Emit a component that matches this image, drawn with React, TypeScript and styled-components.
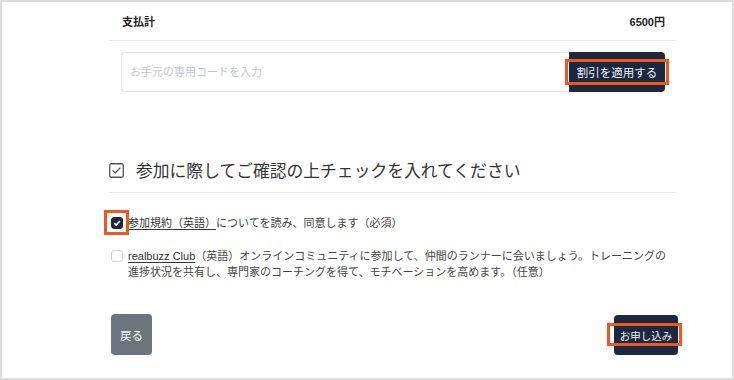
import React, { useState } from 'react';
import styled, { createGlobalStyle } from 'styled-components';

const GlobalStyle = createGlobalStyle`
  html, body {
    margin: 0;
    padding: 0;
    background: #fff;
  }
  body {
    font-family: "Liberation Sans", "Noto Sans CJK JP", sans-serif;
    color: #333;
  }
`;

const NAVY = '#1b2840';
const ORANGE = '#f0561d';

const Frame = styled.div`
  box-sizing: border-box;
  width: 734px;
  height: 380px;
  border: 2px solid #dcdcdc;
  background: #fff;
`;

const Content = styled.div`
  margin-left: 107px;
  width: 568px;
`;

const SummaryRow = styled.div`
  display: flex;
  align-items: center;
  justify-content: space-between;
  height: 38px;
  padding: 0 12px 0 13px;
  border-bottom: 1px solid #e9ecef;
  font-size: 11px;
  font-weight: 700;
  color: #222;
`;

const CouponGroup = styled.div`
  display: flex;
  height: 40px;
  margin: 11px 12px 0 12px;
`;

const CouponInput = styled.input`
  flex: 1;
  min-width: 0;
  box-sizing: border-box;
  height: 40px;
  border: 1px solid #e2e5e9;
  border-right: none;
  border-radius: 4px 0 0 4px;
  padding: 0 8px;
  font-family: "Liberation Sans", "Noto Sans CJK JP", sans-serif;
  font-size: 11px;
  color: #333;
  outline: none;
  &::placeholder {
    color: #c3c7cc;
  }
`;

const DarkButton = styled.button<{ $w: number; $h: number; $size: number; $radius?: string }>`
  position: relative;
  width: ${p => p.$w}px;
  height: ${p => p.$h}px;
  border: none;
  border-radius: ${p => p.$radius || '4px'};
  background: ${NAVY};
  color: #eef1f6;
  font-family: "Liberation Sans", "Noto Sans CJK JP", sans-serif;
  font-size: ${p => p.$size}px;
  padding: 0;
  cursor: pointer;
`;

const GreyButton = styled.button`
  width: 41px;
  height: 41px;
  border: none;
  border-radius: 4px;
  background: #6c757d;
  color: #f2f4f6;
  font-family: "Liberation Sans", "Noto Sans CJK JP", sans-serif;
  font-size: 11.5px;
  padding: 0;
`;

const Highlight = styled.span<{ $l: number; $t: number; $r: number; $b: number }>`
  position: absolute;
  left: ${p => p.$l}px;
  top: ${p => p.$t}px;
  right: ${p => p.$r}px;
  bottom: ${p => p.$b}px;
  border: 3px solid ${ORANGE};
  pointer-events: none;
`;

const Heading = styled.h2`
  display: flex;
  align-items: center;
  gap: 12px;
  margin: 64px 0 0 0;
  height: 28px;
  padding-bottom: 8px;
  border-bottom: 1px solid #e9ecef;
  font-size: 16.8px;
  font-weight: 400;
  color: #333;
  font-family: "Noto Sans CJK JP", sans-serif;
`;

const CheckRow = styled.label<{ $top: number }>`
  display: flex;
  align-items: flex-start;
  gap: 5px;
  margin-top: ${p => p.$top}px;
  font-family: "Liberation Sans", "Noto Sans CJK JP", sans-serif;
  font-size: 11px;
  line-height: 16px;
  color: #444;
`;

const Box = styled.span<{ $checked: boolean; $offset: number }>`
  position: relative;
  flex: none;
  box-sizing: border-box;
  width: 12px;
  height: 12px;
  margin-top: ${p => p.$offset}px;
  margin-left: 2px;
  border-radius: 3px;
  border: 1px solid ${p => (p.$checked ? NAVY : '#cdd1d6')};
  background: ${p => (p.$checked ? NAVY : '#fff')};
  display: flex;
  align-items: center;
  justify-content: center;
`;

const Link = styled.a`
  color: #333;
  text-decoration: underline;
  text-underline-offset: 2px;
`;

const RowText = styled.span`
  flex: 1;
`;

const Actions = styled.div`
  display: flex;
  justify-content: space-between;
  align-items: flex-end;
  margin-top: 34px;
  padding-left: 2px;
`;

const SubmitWrap = styled.div`
  margin-right: -1px;
`;

const CheckSquareIcon = () => (
  <svg width="15" height="15" viewBox="0 0 15 15" fill="none">
    <rect x="0.75" y="0.75" width="13.5" height="13.5" rx="1.5" stroke="#555" strokeWidth="1.3" />
    <path d="M3.6 7.4 L6.2 10 L11.4 4.6" stroke="#555" strokeWidth="1.3" />
  </svg>
);

const TinyCheck = () => (
  <svg width="8" height="8" viewBox="0 0 8 8" fill="none">
    <path d="M1.3 4.2 L3.2 6 L6.8 2" stroke="#fff" strokeWidth="1.6" />
  </svg>
);

const App = (): JSX.Element => {
  const [terms, setTerms] = useState(true);
  const [club, setClub] = useState(false);

  return (
    <>
      <GlobalStyle />
      <Frame>
        <Content>
          <SummaryRow>
            <span>支払計</span>
            <span>6500円</span>
          </SummaryRow>

          <CouponGroup>
            <CouponInput placeholder="お手元の専用コードを入力" />
            <DarkButton $w={96} $h={40} $size={11.5} $radius="0 4px 4px 0">
              割引を適用する
              <Highlight $l={-4} $t={7} $r={-4} $b={7} />
            </DarkButton>
          </CouponGroup>

          <Heading>
            <CheckSquareIcon />
            参加に際してご確認の上チェックを入れてください
          </Heading>

          <CheckRow $top={22} onClick={() => setTerms(!terms)}>
            <Box $checked={terms} $offset={2}>
              {terms && <TinyCheck />}
              <Highlight $l={-8} $t={-8} $r={-7} $b={-7} />
            </Box>
            <RowText>
              <Link>参加規約（英語）</Link>についてを読み、同意します（必須）
            </RowText>
          </CheckRow>

          <CheckRow $top={17} onClick={() => setClub(!club)}>
            <Box $checked={club} $offset={2}>
              {club && <TinyCheck />}
            </Box>
            <RowText>
              <Link>realbuzz Club</Link>（英語）オンラインコミュニティに参加して、仲間のランナーに会いましょう。トレーニングの進捗状況を共有し、専門家のコーチングを得て、モチベーションを高めます。（任意）
            </RowText>
          </CheckRow>

          <Actions>
            <GreyButton>戻る</GreyButton>
            <SubmitWrap>
              <DarkButton $w={64} $h={40} $size={10.5}>
                お申し込み
                <Highlight $l={-7} $t={8} $r={-4} $b={9} />
              </DarkButton>
            </SubmitWrap>
          </Actions>
        </Content>
      </Frame>
    </>
  );
};

export default App;
